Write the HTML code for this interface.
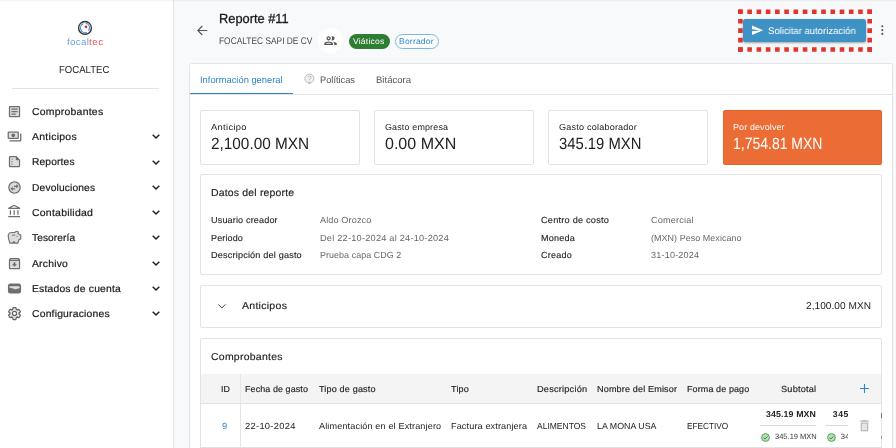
<!DOCTYPE html>
<html lang="es">
<head>
<meta charset="utf-8">
<title>Reporte #11</title>
<style>
*{box-sizing:border-box;margin:0;padding:0}
html,body{width:896px;height:448px;overflow:hidden;background:#f8f9fb;font-family:"Liberation Sans",sans-serif;color:#222}
.a{position:absolute;white-space:nowrap;line-height:1;transform-origin:0 50%}
svg{position:absolute;overflow:visible}
#side{position:absolute;left:0;top:0;width:174px;height:448px;background:#fff;border-right:1px solid #e2e3e5}
#topsh{position:absolute;left:0;top:0;width:896px;height:2px;background:linear-gradient(rgba(0,0,0,.05),rgba(0,0,0,0));z-index:5}
.card{position:absolute;background:#fff;border:1px solid #e3e3e5;border-radius:2px}
.ic{width:15px;height:15px;left:7px}
.ic .f{fill:#dcdcdc;stroke:none}
.ic .s{fill:#6e6e6e;stroke:none}
.chev{left:151.5px;width:8px;height:5px}
.chev path{fill:none;stroke:#222;stroke-width:1.5}
</style>
</head>
<body>
<div id="root" style="position:absolute;left:0;top:0;width:896px;height:448px;will-change:transform;text-rendering:geometricPrecision">
<div id="topsh"></div>
<div id="side"></div>

<!-- logo -->
<svg style="left:70px;top:18px;width:30px;height:20px" viewBox="70 18 30 20">
  <circle cx="85" cy="27.9" r="6.400" fill="none" stroke="#333" stroke-width="1.400"/>
  <path d="M83.2 23.8a4.5 4.500 0 0 0 3.600 8.400" fill="none" stroke="#4d90d0" stroke-width="1.100"/>
  <path d="M85.800 23.300a4.500 4.500 0 0 1 2.700 7.300" fill="none" stroke="#4d90d0" stroke-width="1.100"/>
  <circle cx="86" cy="26.800" r="1.350" fill="#e02b27"/>
</svg>


<div class="a" style="left:12px;top:88px;width:147px;height:1px;background:#e4e4e4"></div>

<!-- sidebar icons -->
<svg class="ic" style="top:103.700px" viewBox="0 0 24 24"><path class="f" d="M5 5h14v14H5z"/><path class="s" d="M19 5v14H5V5h14m0-2H5c-1.100 0-2 .9-2 2v14c0 1.100.9 2 2 2h14c1.100 0 2-.9 2-2V5c0-1.100-.9-2-2-2zM14 17H7v-2h7v2zm3-4H7v-2h10v2zm0-4H7V7h10v2z"/></svg>
<svg class="ic" style="top:128.900px" viewBox="0 0 24 24"><path class="f" d="M3 6h14v8H3z"/><path class="s" d="M19 14V6c0-1.100-.9-2-2-2H3c-1.100 0-2 .9-2 2v8c0 1.100.9 2 2 2h14c1.100 0 2-.9 2-2zm-2 0H3V6h14v8zm-7-7c-1.660 0-3 1.340-3 3s1.340 3 3 3 3-1.340 3-3-1.340-3-3-3zm13 0v11c0 1.100-.9 2-2 2H4v-2h17V7h2z"/></svg>
<svg class="ic" style="top:154.200px" viewBox="0 0 24 24"><path class="f" d="M5 5v14h14v-9h-5V5z"/><path class="s" d="M15 3H5c-1.100 0-1.990.9-1.990 2L3 19c0 1.100.89 2 1.990 2H19c1.100 0 2-.9 2-2V9l-6-6zM5 19V5h9v5h5v9H5zM9 8c0 .55-.45 1-1 1s-1-.45-1-1 .45-1 1-1 1 .45 1 1zm0 4c0 .55-.45 1-1 1s-1-.45-1-1 .45-1 1-1 1 .45 1 1zm0 4c0 .55-.45 1-1 1s-1-.45-1-1 .45-1 1-1 1 .45 1 1z"/></svg>
<svg class="ic" style="top:179.500px" viewBox="0 0 24 24"><circle class="f" cx="12" cy="12" r="9"/><path class="s" d="M12 2C6.480 2 2 6.480 2 12s4.480 10 10 10 10-4.480 10-10S17.520 2 12 2zm0 18c-4.410 0-8-3.590-8-8s3.590-8 8-8 8 3.590 8 8-3.590 8-8 8zM15 6.500V9h-4v2h4v2.500l3.500-3.500L15 6.500zM9 10.500L5.500 14 9 17.500V15h4v-2H9v-2.500z"/></svg>
<svg class="ic" style="top:204.300px" viewBox="0 0 24 24"><path class="s" d="M6.500 10h-2v7h2v-7zm6 0h-2v7h2v-7zm8.500 9H2v2h19v-2zm-2.500-9h-2v7h2v-7zm-7-6.740L16.710 6H6.290l5.210-2.740m0-2.260L2 6v2h19V6l-9.500-5z"/></svg>
<svg class="ic" style="top:230.100px" viewBox="0 0 24 24"><path d="M19.830 7.500l-2.270-2.270c.07-.42.180-.81.320-1.150.08-.18.120-.37.120-.58 0-.83-.67-1.500-1.500-1.500-1.640 0-3.090.79-4 2h-5C4.460 4 2 6.460 2 9.500S4.500 21 4.500 21H10v-2h2v2h5.500l1.680-5.590L22 14.470V7.500h-2.170z" fill="#dcdcdc" stroke="#6e6e6e" stroke-width="1.800" stroke-linejoin="round"/><path class="s" d="M13 9H8V7.400h5V9z"/><circle class="s" cx="16" cy="10" r="1"/></svg>
<svg class="ic" style="top:255.700px" viewBox="0 0 24 24"><path class="f" d="M5 8h14v11H5z"/><path class="s" d="M20.540 5.230l-1.390-1.680C18.880 3.210 18.470 3 18 3H6c-.47 0-.88.210-1.160.55L3.460 5.230C3.170 5.570 3 6.020 3 6.500V19c0 1.100.9 2 2 2h14c1.100 0 2-.9 2-2V6.500c0-.48-.17-.93-.46-1.270zM6.240 5h11.520l.81.970H5.440l.8-.97zM5 19V8h14v11H5zm8.450-9h-2.900v3H8l4 4 4-4h-2.550z"/></svg>
<svg class="ic" style="top:280.700px" viewBox="0 0 24 24"><rect x="1.500" y="4" width="21" height="16" rx="4" fill="#6e6e6e"/><path d="M3.800 8.200h16.400l-.3 3.200-6.400 1.600-9.700-2.600z" fill="#e0e0e0"/></svg>
<svg class="ic" style="top:306.100px" viewBox="0 0 24 24"><path d="M19.140 12.940c.04-.3.060-.61.060-.94 0-.32-.02-.64-.07-.94l2.030-1.580c.18-.14.230-.41.120-.61l-1.920-3.320c-.12-.22-.37-.29-.59-.22l-2.390.96c-.5-.38-1.030-.7-1.620-.94l-.36-2.540c-.04-.24-.24-.41-.48-.41h-3.840c-.24 0-.43.170-.47.410l-.36 2.540c-.59.240-1.130.57-1.620.94l-2.390-.96c-.22-.08-.47 0-.59.220L2.740 8.870c-.12.210-.08.470.12.610l2.030 1.580c-.05.300-.09.630-.09.940s.02.640.07.940l-2.030 1.580c-.18.140-.23.410-.12.610l1.920 3.320c.12.220.37.290.59.220l2.390-.96c.5.380 1.030.7 1.620.94l.36 2.540c.05.240.24.410.48.410h3.840c.24 0 .44-.17.470-.41l.36-2.540c.59-.24 1.130-.56 1.620-.94l2.390.96c.22.080.47 0 .59-.22l1.920-3.320c.12-.22.070-.47-.12-.61l-2.010-1.580z" fill="#ededed" stroke="#626262" stroke-width="2"/><circle cx="12" cy="12" r="3.300" fill="#fff" stroke="#626262" stroke-width="1.900"/></svg>

<!-- chevrons -->
<svg class="chev" style="top:134.200px" viewBox="0 0 8 5"><path d="M.7.700L4 4l3.300-3.300"/></svg>
<svg class="chev" style="top:159.500px" viewBox="0 0 8 5"><path d="M.7.700L4 4l3.300-3.300"/></svg>
<svg class="chev" style="top:184.800px" viewBox="0 0 8 5"><path d="M.7.700L4 4l3.300-3.300"/></svg>
<svg class="chev" style="top:210.100px" viewBox="0 0 8 5"><path d="M.7.700L4 4l3.300-3.300"/></svg>
<svg class="chev" style="top:235.400px" viewBox="0 0 8 5"><path d="M.7.700L4 4l3.300-3.300"/></svg>
<svg class="chev" style="top:260.700px" viewBox="0 0 8 5"><path d="M.7.700L4 4l3.300-3.300"/></svg>
<svg class="chev" style="top:286px" viewBox="0 0 8 5"><path d="M.7.700L4 4l3.300-3.300"/></svg>
<svg class="chev" style="top:311.300px" viewBox="0 0 8 5"><path d="M.7.700L4 4l3.300-3.300"/></svg>

<!-- header -->
<svg style="left:197px;top:25px;width:11px;height:11px" viewBox="0 0 11 11"><path d="M10.300 5.500H1M5.300 1L.8 5.500l4.500 4.500" fill="none" stroke="#555" stroke-width="1.100"/></svg>
<div class="a" style="left:318.300px;top:28px;width:25px;height:25px;border-radius:50%;background:#fff"></div>
<svg style="left:323px;top:33px;width:15px;height:15px" viewBox="0 0 24 24"><path fill="#555" d="M9 13.750c-2.340 0-7 1.170-7 3.500V19h14v-1.750c0-2.330-4.660-3.500-7-3.500zM4.340 17c.84-.58 2.870-1.250 4.660-1.250s3.820.67 4.660 1.250H4.340zM9 12c1.930 0 3.500-1.570 3.500-3.500S10.930 5 9 5 5.500 6.570 5.500 8.500 7.070 12 9 12zm0-5c.83 0 1.500.67 1.500 1.500S9.830 10 9 10s-1.500-.67-1.500-1.500S8.170 7 9 7zm7.040 6.810c1.160.84 1.960 1.960 1.960 3.440V19h4v-1.750c0-2.020-3.500-3.170-5.960-3.440zM15 12c1.930 0 3.500-1.570 3.500-3.500S16.930 5 15 5c-.54 0-1.040.13-1.500.35.630.89 1 1.980 1 3.150s-.37 2.260-1 3.150c.46.220.96.350 1.500.350z"/></svg>
<div class="a" style="left:348.700px;top:33.600px;width:41.300px;height:15.300px;border-radius:8px;background:#2e7d32"></div>
<div class="a" style="left:394.800px;top:33.600px;width:44.100px;height:15.300px;border-radius:8px;border:1px solid #7db7e0;background:#fcfdff"></div>

<!-- dotted highlight -->
<svg style="left:0;top:0;width:896px;height:60px" viewBox="0 0 896 60">
 <g stroke="#e2342d" stroke-width="4.600" fill="none">
  <path d="M738.100 11.800H872" stroke-dasharray="4.600 4.636"/>
  <path d="M738.100 49.500H872" stroke-dasharray="4.600 4.636"/>
  <path d="M740.400 9.500V51.800" stroke-dasharray="4.600 4.825"/>
  <path d="M869.700 9.500V51.800" stroke-dasharray="4.600 4.825"/>
 </g>
</svg>
<div class="a" style="left:743.100px;top:18.900px;width:123px;height:22.700px;border-radius:2.500px;background:#3f92c4;box-shadow:0 1px 2.500px rgba(0,0,0,.35)"></div>
<svg style="left:750.600px;top:24.200px;width:12.600px;height:12.600px" viewBox="0 0 24 24"><path fill="#fff" d="M2.010 21L23 12 2.010 3 2 10l15 2-15 2z"/></svg>
<svg style="left:880px;top:24px;width:5px;height:12px" viewBox="0 0 5 12"><circle cx="2.300" cy="2.300" r="1.050" fill="#555"/><circle cx="2.300" cy="6.100" r="1.050" fill="#555"/><circle cx="2.300" cy="9.900" r="1.050" fill="#555"/></svg>

<!-- main card -->
<div class="card" style="left:189px;top:63px;width:703.500px;height:400px;border-radius:2.500px"></div>
<div class="a" style="left:190px;top:94px;width:701.500px;height:1px;background:#e3e4e6"></div>
<div class="a" style="left:189.500px;top:92.700px;width:103.500px;height:1.800px;background:#2f86c4"></div>
<svg style="left:303.500px;top:72.500px;width:11px;height:12px" viewBox="0 0 11 12"><circle cx="5.400" cy="5.500" r="4.500" fill="#f2f2f2" stroke="#b2b2b2" stroke-width=".9"/><path d="M4 4.400a1.500 1.500 0 1 1 2.200 1.300c-.6.300-.8.600-.8 1.200M5.400 8v.9" fill="none" stroke="#b2b2b2" stroke-width=".9"/><path d="M4.300 9.800l1.100 1.700 1.100-1.700z" fill="#b2b2b2"/></svg>

<!-- stat cards -->
<div class="card" style="left:200px;top:110px;width:159.500px;height:54.500px"></div>
<div class="card" style="left:374.300px;top:110px;width:159.300px;height:54.500px"></div>
<div class="card" style="left:548.400px;top:110px;width:159.300px;height:54.500px"></div>
<div class="card" style="left:723.300px;top:110px;width:158.700px;height:54.500px;background:#ec6c35;border-color:#e8642c"></div>

<!-- datos -->
<div class="card" style="left:200px;top:174px;width:682px;height:100.500px"></div>
<!-- anticipos -->
<div class="card" style="left:200px;top:285px;width:682px;height:42.800px"></div>
<svg style="left:217.600px;top:303.800px;width:7.800px;height:4.800px" viewBox="0 0 8 5"><path d="M.4.400L4 4.200 7.600.4" fill="none" stroke="#444" stroke-width="1"/></svg>
<!-- comprobantes -->
<div class="card" style="left:200px;top:338.300px;width:682px;height:130px"></div>
<div class="a" style="left:201px;top:373.700px;width:680px;height:29.500px;background:#f4f4f4"></div>
<div class="a" style="left:201px;top:403px;width:680px;height:1px;background:#e2e2e2"></div>
<div class="a" style="left:201px;top:447px;width:680px;height:1px;background:#e2e2e2"></div>
<div class="a" style="left:240px;top:373.700px;width:1px;height:75px;background:#e6e6e6"></div>
<div class="a" style="left:760.200px;top:425.400px;width:56px;height:1px;background:#d9d9d9"></div>
<svg style="left:760.500px;top:432.700px;width:9px;height:9px" viewBox="0 0 9 9"><circle cx="4.500" cy="4.500" r="3.900" fill="#b7dfb9" stroke="#43a047" stroke-width=".9"/><path d="M2.600 4.600l1.400 1.400 2.500-2.700" fill="none" stroke="#2e7d32" stroke-width=".9"/></svg>
<!-- scrolled (clipped) second amount column -->
<div class="a" style="left:826px;top:404px;width:22px;height:43px;overflow:hidden">
  <div class="a" style="left:.3px;top:21.400px;width:56px;height:1px;background:#d9d9d9"></div>
  <div class="a" style="left:6.800px;top:5.800px;font-size:8.600px;font-weight:700;letter-spacing:.55px;color:#222">345.19 MXN</div>
  <div class="a" style="left:14.800px;top:28.600px;font-size:7.600px;letter-spacing:.2px;color:#383838">345.19 MXN</div>
  <svg style="left:.7px;top:28.700px;width:9px;height:9px" viewBox="0 0 9 9"><circle cx="4.500" cy="4.500" r="3.900" fill="#b7dfb9" stroke="#43a047" stroke-width=".9"/><path d="M2.600 4.600l1.400 1.400 2.500-2.700" fill="none" stroke="#2e7d32" stroke-width=".9"/></svg>
</div>
<svg style="left:860px;top:384px;width:9px;height:9px" viewBox="0 0 9 9"><path d="M4.500 0v9M0 4.500h9" stroke="#2f86c4" stroke-width="1.100" fill="none"/></svg>
<svg style="left:857px;top:417.500px;width:15px;height:15px" viewBox="0 0 24 24"><path fill="#e6e6e6" d="M8 9h8v10H8z"/><path fill="#b9b9b9" d="M6 19c0 1.100.9 2 2 2h8c1.100 0 2-.9 2-2V7H6v12zM8 9h8v10H8V9zm7.500-5l-1-1h-5l-1 1H5v2h14V4h-3.500z"/></svg>

<div class="a" style="left:880.500px;top:413px;width:1px;height:4.500px;background:#777"></div>
<div class="a" style="left:880.500px;top:435.500px;width:1px;height:3.500px;background:#999"></div>
<div class="a" style="left:66.94px;top:38px;font-size:9.2px;font-weight:400;color:#6ba4da;letter-spacing:0.302px;transform:scaleX(1.0664);">focal</div>
<div class="a" style="left:89.04px;top:38px;font-size:9.2px;font-weight:400;color:#e4554e;letter-spacing:0.47px;transform:scaleX(1.0829);">tec</div>
<div class="a" style="left:59.39px;top:66px;font-size:10.2px;font-weight:400;color:#2a2a2a;letter-spacing:0.0px;transform:scaleX(0.9385);">FOCALTEC</div>
<div class="a" style="left:32.20px;top:108px;font-size:10.0px;font-weight:400;color:#1b1b1b;letter-spacing:0.24px;transform:scaleX(1.042);-webkit-text-stroke:.2px #1b1b1b;">Comprobantes</div>
<div class="a" style="left:32.20px;top:133px;font-size:10.0px;font-weight:400;color:#1b1b1b;letter-spacing:0.245px;transform:scaleX(1.0508);-webkit-text-stroke:.2px #1b1b1b;">Anticipos</div>
<div class="a" style="left:32.20px;top:158px;font-size:10.0px;font-weight:400;color:#1b1b1b;letter-spacing:0.134px;transform:scaleX(1.0237);-webkit-text-stroke:.2px #1b1b1b;">Reportes</div>
<div class="a" style="left:32.20px;top:184px;font-size:10.0px;font-weight:400;color:#1b1b1b;letter-spacing:0.135px;transform:scaleX(1.0254);-webkit-text-stroke:.2px #1b1b1b;">Devoluciones</div>
<div class="a" style="left:32.20px;top:209px;font-size:10.0px;font-weight:400;color:#1b1b1b;letter-spacing:0.23px;transform:scaleX(1.0476);-webkit-text-stroke:.2px #1b1b1b;">Contabilidad</div>
<div class="a" style="left:32.20px;top:234px;font-size:10.0px;font-weight:400;color:#1b1b1b;letter-spacing:0.087px;transform:scaleX(1.0169);-webkit-text-stroke:.2px #1b1b1b;">Tesorería</div>
<div class="a" style="left:32.20px;top:260px;font-size:10.0px;font-weight:400;color:#1b1b1b;letter-spacing:0.196px;transform:scaleX(1.0366);-webkit-text-stroke:.2px #1b1b1b;">Archivo</div>
<div class="a" style="left:32.20px;top:285px;font-size:10.0px;font-weight:400;color:#1b1b1b;letter-spacing:0.18px;transform:scaleX(1.0359);-webkit-text-stroke:.2px #1b1b1b;">Estados de cuenta</div>
<div class="a" style="left:32.20px;top:310px;font-size:10.0px;font-weight:400;color:#1b1b1b;letter-spacing:0.184px;transform:scaleX(1.0369);-webkit-text-stroke:.2px #1b1b1b;">Configuraciones</div>
<div class="a" style="left:218.94px;top:12px;font-size:13.2px;font-weight:400;color:#1a1a1a;letter-spacing:0.0px;transform:scaleX(0.9719);-webkit-text-stroke:.3px #1a1a1a;">Reporte #11</div>
<div class="a" style="left:219.12px;top:37px;font-size:9.6px;font-weight:400;color:#4a4a4a;letter-spacing:0.0px;transform:scaleX(0.873);">FOCALTEC SAPI DE CV</div>
<div class="a" style="left:353.34px;top:38px;font-size:8.2px;font-weight:400;color:#fff;letter-spacing:0.185px;transform:scaleX(1.0476);">Viáticos</div>
<div class="a" style="left:399.39px;top:38px;font-size:8.2px;font-weight:400;color:#2f86c4;letter-spacing:0.188px;transform:scaleX(1.043);">Borrador</div>
<div class="a" style="left:768.22px;top:27px;font-size:9.7px;font-weight:400;color:#fff;letter-spacing:0.0px;transform:scaleX(0.9822);">Solicitar autorización</div>
<div class="a" style="left:199.62px;top:76px;font-size:9.5px;font-weight:400;color:#2f86c4;letter-spacing:0.0px;transform:scaleX(0.9837);">Información general</div>
<div class="a" style="left:320.32px;top:76px;font-size:9.5px;font-weight:400;color:#555;letter-spacing:0.0px;transform:scaleX(0.9748);">Políticas</div>
<div class="a" style="left:376.02px;top:76px;font-size:9.5px;font-weight:400;color:#555;letter-spacing:0.01px;transform:scaleX(1.002);">Bitácora</div>
<div class="a" style="left:210.56px;top:123px;font-size:8.7px;font-weight:400;color:#222;letter-spacing:0.304px;transform:scaleX(1.074);">Anticipo</div>
<div class="a" style="left:210.59px;top:136px;font-size:16.2px;font-weight:400;color:#222;letter-spacing:0.0px;transform:scaleX(0.9478);">2,100.00 MXN</div>
<div class="a" style="left:384.56px;top:123px;font-size:8.7px;font-weight:400;color:#222;letter-spacing:0.145px;transform:scaleX(1.0302);">Gasto empresa</div>
<div class="a" style="left:384.79px;top:136px;font-size:16.2px;font-weight:400;color:#222;letter-spacing:0.0px;transform:scaleX(0.9902);">0.00 MXN</div>
<div class="a" style="left:559.37px;top:123px;font-size:8.7px;font-weight:400;color:#222;letter-spacing:0.192px;transform:scaleX(1.0449);">Gasto colaborador</div>
<div class="a" style="left:559.39px;top:136px;font-size:16.2px;font-weight:400;color:#222;letter-spacing:0.0px;transform:scaleX(0.9155);">345.19 MXN</div>
<div class="a" style="left:733.37px;top:123px;font-size:8.7px;font-weight:400;color:#fff;letter-spacing:0.125px;transform:scaleX(1.0289);">Por devolver</div>
<div class="a" style="left:733.19px;top:136px;font-size:16.2px;font-weight:400;color:#fff;letter-spacing:0.0px;transform:scaleX(0.8647);">1,754.81 MXN</div>
<div class="a" style="left:210.50px;top:189px;font-size:10.1px;font-weight:400;color:#222;letter-spacing:0.174px;transform:scaleX(1.0372);-webkit-text-stroke:.15px #222;">Datos del reporte</div>
<div class="a" style="left:210.56px;top:216px;font-size:8.8px;font-weight:400;color:#1e1e1e;letter-spacing:0.139px;transform:scaleX(1.032);-webkit-text-stroke:.12px #1e1e1e;">Usuario creador</div>
<div class="a" style="left:210.56px;top:234px;font-size:8.8px;font-weight:400;color:#1e1e1e;letter-spacing:0.12px;transform:scaleX(1.0243);-webkit-text-stroke:.12px #1e1e1e;">Periodo</div>
<div class="a" style="left:210.56px;top:251px;font-size:8.8px;font-weight:400;color:#1e1e1e;letter-spacing:0.159px;transform:scaleX(1.0392);-webkit-text-stroke:.12px #1e1e1e;">Descripción del gasto</div>
<div class="a" style="left:320.46px;top:216px;font-size:8.8px;font-weight:400;color:#666;letter-spacing:0.14px;transform:scaleX(1.0299);">Aldo Orozco</div>
<div class="a" style="left:320.46px;top:234px;font-size:8.8px;font-weight:400;color:#666;letter-spacing:0.202px;transform:scaleX(1.0487);">Del 22-10-2024 al 24-10-2024</div>
<div class="a" style="left:320.46px;top:251px;font-size:8.8px;font-weight:400;color:#666;letter-spacing:0.061px;transform:scaleX(1.0125);">Prueba capa CDG 2</div>
<div class="a" style="left:540.56px;top:216px;font-size:8.8px;font-weight:400;color:#1e1e1e;letter-spacing:0.198px;transform:scaleX(1.0466);-webkit-text-stroke:.12px #1e1e1e;">Centro de costo</div>
<div class="a" style="left:540.56px;top:234px;font-size:8.8px;font-weight:400;color:#1e1e1e;letter-spacing:0.204px;transform:scaleX(1.0331);-webkit-text-stroke:.12px #1e1e1e;">Moneda</div>
<div class="a" style="left:540.56px;top:251px;font-size:8.8px;font-weight:400;color:#1e1e1e;letter-spacing:0.178px;transform:scaleX(1.0319);-webkit-text-stroke:.12px #1e1e1e;">Creado</div>
<div class="a" style="left:650.86px;top:216px;font-size:8.8px;font-weight:400;color:#666;letter-spacing:0.18px;transform:scaleX(1.0378);">Comercial</div>
<div class="a" style="left:650.86px;top:234px;font-size:8.8px;font-weight:400;color:#666;letter-spacing:0.068px;transform:scaleX(1.0142);">(MXN) Peso Mexicano</div>
<div class="a" style="left:650.86px;top:251px;font-size:8.8px;font-weight:400;color:#666;letter-spacing:0.166px;transform:scaleX(1.0344);">31-10-2024</div>
<div class="a" style="left:242.40px;top:302px;font-size:10px;font-weight:400;color:#222;letter-spacing:0.256px;transform:scaleX(1.0533);-webkit-text-stroke:.15px #222;">Anticipos</div>
<div class="a" style="left:806.10px;top:302px;font-size:10px;font-weight:400;color:#222;letter-spacing:0.048px;transform:scaleX(1.0083);">2,100.00 MXN</div>
<div class="a" style="left:210.50px;top:353px;font-size:10px;font-weight:400;color:#222;letter-spacing:0.257px;transform:scaleX(1.045);-webkit-text-stroke:.15px #222;">Comprobantes</div>
<div class="a" style="left:220.66px;top:385px;font-size:8.8px;font-weight:400;color:#222;letter-spacing:0.044px;transform:scaleX(1.005);-webkit-text-stroke:.15px #222;">ID</div>
<div class="a" style="left:245.36px;top:385px;font-size:8.8px;font-weight:400;color:#222;letter-spacing:0.085px;transform:scaleX(1.0185);-webkit-text-stroke:.15px #222;">Fecha de gasto</div>
<div class="a" style="left:318.76px;top:385px;font-size:8.8px;font-weight:400;color:#222;letter-spacing:0.142px;transform:scaleX(1.0332);-webkit-text-stroke:.15px #222;">Tipo de gasto</div>
<div class="a" style="left:451.16px;top:385px;font-size:8.8px;font-weight:400;color:#222;letter-spacing:0.178px;transform:scaleX(1.0328);-webkit-text-stroke:.15px #222;">Tipo</div>
<div class="a" style="left:537.06px;top:385px;font-size:8.8px;font-weight:400;color:#222;letter-spacing:0.198px;transform:scaleX(1.0449);-webkit-text-stroke:.15px #222;">Descripción</div>
<div class="a" style="left:597.16px;top:385px;font-size:8.8px;font-weight:400;color:#222;letter-spacing:0.143px;transform:scaleX(1.0312);-webkit-text-stroke:.15px #222;">Nombre del Emisor</div>
<div class="a" style="left:687.06px;top:385px;font-size:8.8px;font-weight:400;color:#222;letter-spacing:0.103px;transform:scaleX(1.0212);-webkit-text-stroke:.15px #222;">Forma de pago</div>
<div class="a" style="left:781.16px;top:385px;font-size:8.8px;font-weight:400;color:#222;letter-spacing:0.193px;transform:scaleX(1.0437);-webkit-text-stroke:.15px #222;">Subtotal</div>
<div class="a" style="left:222.16px;top:422px;font-size:8.8px;font-weight:400;color:#2f86c4;letter-spacing:0.235px;transform:scaleX(1.0503);">9</div>
<div class="a" style="left:245.36px;top:422px;font-size:8.8px;font-weight:400;color:#222;letter-spacing:0.283px;transform:scaleX(1.06);">22-10-2024</div>
<div class="a" style="left:318.76px;top:422px;font-size:8.8px;font-weight:400;color:#222;letter-spacing:0.133px;transform:scaleX(1.0336);">Alimentación en el Extranjero</div>
<div class="a" style="left:451.16px;top:422px;font-size:8.8px;font-weight:400;color:#222;letter-spacing:0.131px;transform:scaleX(1.0323);">Factura extranjera</div>
<div class="a" style="left:537.06px;top:422px;font-size:8.8px;font-weight:400;color:#222;letter-spacing:0.0px;transform:scaleX(0.9667);">ALIMENTOS</div>
<div class="a" style="left:597.16px;top:422px;font-size:8.8px;font-weight:400;color:#222;letter-spacing:0.012px;transform:scaleX(1.0021);">LA MONA USA</div>
<div class="a" style="left:687.06px;top:422px;font-size:8.8px;font-weight:400;color:#222;letter-spacing:0.0px;transform:scaleX(0.9386);">EFECTIVO</div>
<div class="a" style="left:766.37px;top:410px;font-size:8.6px;font-weight:700;color:#222;letter-spacing:0.115px;transform:scaleX(1.0222);">345.19 MXN</div>
<div class="a" style="left:774.52px;top:433px;font-size:7.6px;font-weight:400;color:#383838;letter-spacing:0.0px;transform:scaleX(0.9901);">345.19 MXN</div>
</div>
</body>
</html>
